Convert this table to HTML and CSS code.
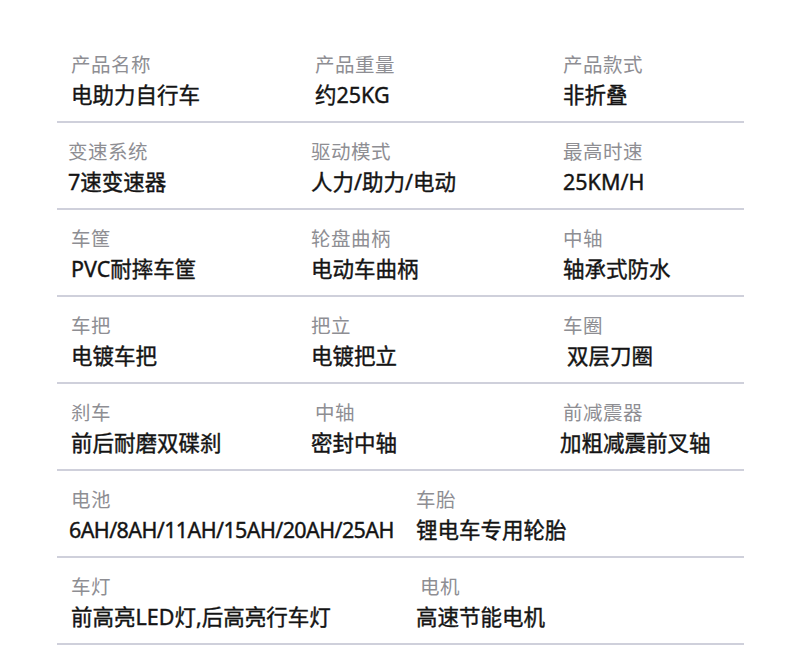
FILE: index.html
```html
<!DOCTYPE html>
<html lang="zh-CN">
<head>
<meta charset="utf-8">
<link rel="stylesheet" href="styles.css">
</head>
<body>
<div class="specs">
  <div class="row three">
    <div class="cell"><div class="label">产品名称</div><div class="value">电助力自行车</div></div>
    <div class="cell c2"><div class="label">产品重量</div><div class="value">约25KG</div></div>
    <div class="cell c3"><div class="label">产品款式</div><div class="value">非折叠</div></div>
  </div>
  <div class="row three">
    <div class="cell shift"><div class="label">变速系统</div><div class="value">7速变速器</div></div>
    <div class="cell"><div class="label">驱动模式</div><div class="value">人力/助力/电动</div></div>
    <div class="cell c3"><div class="label">最高时速</div><div class="value">25KM/H</div></div>
  </div>
  <div class="row three">
    <div class="cell"><div class="label">车筐</div><div class="value">PVC耐摔车筐</div></div>
    <div class="cell"><div class="label">轮盘曲柄</div><div class="value">电动车曲柄</div></div>
    <div class="cell c3"><div class="label">中轴</div><div class="value">轴承式防水</div></div>
  </div>
  <div class="row three">
    <div class="cell"><div class="label">车把</div><div class="value">电镀车把</div></div>
    <div class="cell"><div class="label">把立</div><div class="value">电镀把立</div></div>
    <div class="cell c3"><div class="label">车圈</div><div class="value indent">双层刀圈</div></div>
  </div>
  <div class="row three">
    <div class="cell"><div class="label">刹车</div><div class="value">前后耐磨双碟刹</div></div>
    <div class="cell"><div class="label indent">中轴</div><div class="value">密封中轴</div></div>
    <div class="cell c3"><div class="label">前减震器</div><div class="value shift">加粗减震前叉轴</div></div>
  </div>
  <div class="row two">
    <div class="cell"><div class="label">电池</div><div class="value tight">6AH/8AH/11AH/15AH/20AH/25AH</div></div>
    <div class="cell"><div class="label">车胎</div><div class="value">锂电车专用轮胎</div></div>
  </div>
  <div class="row two">
    <div class="cell"><div class="label">车灯</div><div class="value">前高亮LED灯,后高亮行车灯</div></div>
    <div class="cell"><div class="label indent">电机</div><div class="value">高速节能电机</div></div>
  </div>
</div>
</body>
</html>
```
FILE: styles.css
```css
html, body {
  margin: 0;
  padding: 0;
  background: #ffffff;
}
body {
  font-family: "Noto Sans CJK SC", "Noto Sans", sans-serif;
  width: 790px;
  height: 670px;
  overflow: hidden;
}
.specs {
  margin: 36px 0 0 57px;
  width: 687px;
}
.row {
  display: grid;
  height: 85px;
  border-bottom: 2px solid #cfd0db;
  padding-left: 14px;
  box-sizing: content-box;
}
.row.three {
  grid-template-columns: 240px 252px 1fr;
}
.row.two {
  grid-template-columns: 345px 1fr;
}
.cell {
  display: flex;
  flex-direction: column;
  padding-top: 13px;
}
.cell.c2 {
  padding-left: 4px;
}
.cell.shift {
  margin-left: -3px;
}
.label {
  font-size: 19.5px;
  line-height: 30px;
  color: #8e8e93;
  letter-spacing: 0.5px;
}
.value {
  font-family: "Noto Sans", "Noto Sans CJK SC", sans-serif;
  font-size: 21.5px;
  line-height: 32px;
  font-weight: 400;
  color: #141414;
  -webkit-text-stroke: 0.4px #141414;
}
.value.indent, .label.indent {
  margin-left: 4px;
}
.value.shift {
  margin-left: -3px;
}
.value.tight {
  margin-left: -2px;
  letter-spacing: -0.6px;
}
```
